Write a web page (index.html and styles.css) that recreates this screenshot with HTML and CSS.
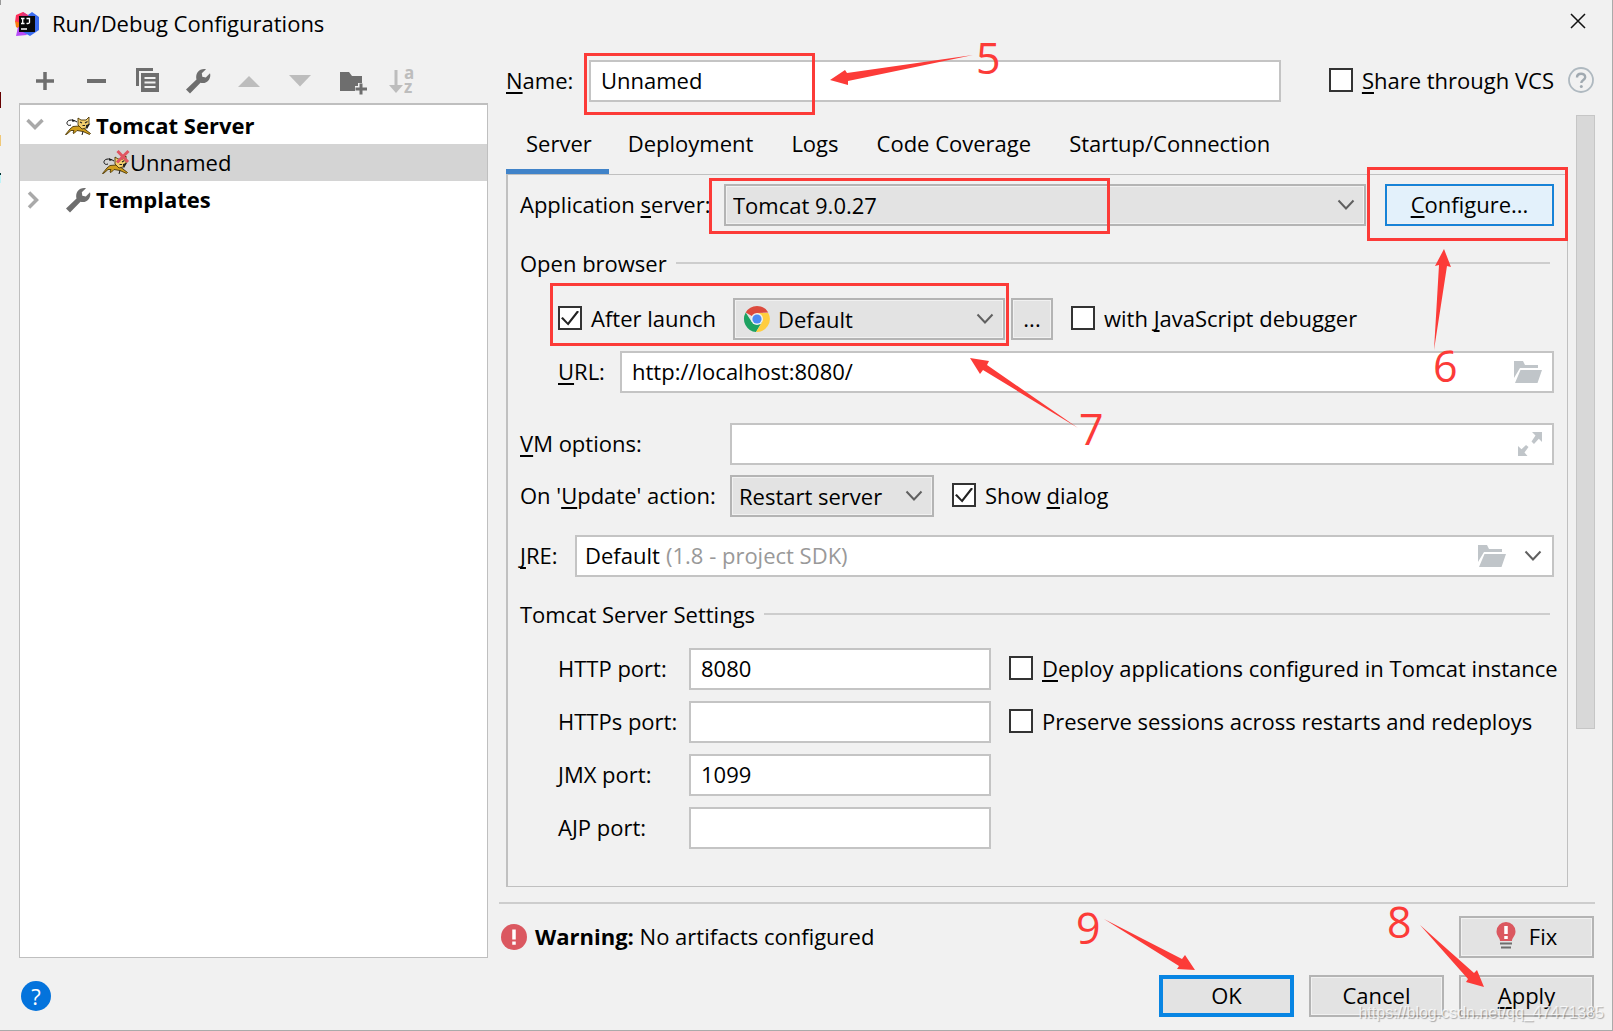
FILE: index.html
```html
<!DOCTYPE html>
<html lang="en">
<head>
<meta charset="utf-8">
<title>Run/Debug Configurations</title>
<link rel="stylesheet" href="styles.css">
</head>
<body>
<svg class="defs" aria-hidden="true">
  <symbol id="chevron" viewBox="0 0 18 12"><path d="M1.5 1.5 9 9.5 16.500 1.500" fill="none" stroke="#606060" stroke-width="2"/></symbol>
  <symbol id="wrench" viewBox="0 0 26 26"><path d="M1 21.500 11.500 11.500C10.500 7.500 12 3.500 15.500 1.800 17.500.8 19.500.7 21 1.200L16.800 5.200 17.300 8.800 20.800 9.400 25 5.200C25.600 7 25.400 9.500 24 11.700 22 14.600 18.800 15.600 15.500 14.800L5 25.500Z" fill="#6e6e6e"/></symbol>
  <symbol id="folder" viewBox="0 0 28 22"><path d="M0 0H9L11 4H24V7H6L0 17ZM6.500 9H28L23.500 22H1Z" fill="#c0c5c9"/></symbol>
  <symbol id="tomcat" viewBox="0 0 26 20">
    <path d="M12 6C7 2.500 1.500 4 2 7.500 2.200 9 4 10 6 9" fill="none" stroke="#111" stroke-width="1"/>
    <path d="M7 3 10 5 7.500 6" fill="#111"/>
    <path d="M.5 18.500 5 13 8 10.500 14 10 19 12.500 25.500 17.500 24.500 18.500 18 15.500 12 14.500 9 17.500 8 17 9 14.500 6 14.500 1.500 18.500Z" fill="#d19e1d" stroke="#4a3505" stroke-width=".9"/>
    <path d="M13 2 16 4H21L24 1V8L21 12 17 13 13 9Z" fill="#f4cf6d" stroke="#4a3505" stroke-width=".9"/>
    <path d="M15 6 17 7M20 7 22.500 5.500M17.500 9.500H20M21.500 9.500 24 8.500 22 12Z" fill="#222" stroke="#222" stroke-width="1.100"/>
    <path d="M18 15.500 17 19" stroke="#111" stroke-width="1"/>
  </symbol>
</svg>

<div class="dialog">
  <header class="titlebar">
    <svg class="logo" viewBox="0 0 24 24" aria-hidden="true">
      <path d="M1 3 8 0 13 3 9 13 0 10Z" fill="#fe315d"/>
      <path d="M0 9 5 11 6 18 1 15Z" fill="#f97a12"/>
      <path d="M3 15 9 17 12 23 1 24Z" fill="#b74af7"/>
      <path d="M13 3 17 0 24 5V18L15 24 8 20Z" fill="#3b6cf0"/>
      <path d="M8 0 14 4 11 8 6 5Z" fill="#e2337b"/>
      <rect x="4" y="4" width="16" height="16" fill="#080808"/>
      <path d="M6 6.500H9.500M7.700 6.500V11.500M6 11.500H9.500M11.500 6.500H14.500V10.500Q14 12 11.500 11.300M6 17H12" fill="none" stroke="#fff" stroke-width="1.300"/>
    </svg>
    <h1>Run/Debug Configurations</h1>
    <button class="icon-button close" aria-label="Close"><svg width="14" height="14" viewBox="0 0 14 14"><path d="M0 0 14 14M14 0 0 14" stroke="#111" stroke-width="1.500"/></svg></button>
  </header>

  <div class="content">
    <aside class="sidebar">
      <div class="toolbar">
        <button class="icon-button" aria-label="Add"><svg viewBox="0 0 26 26"><path d="M13 4V22M4 13H22" stroke="#6e6e6e" stroke-width="3.500"/></svg></button>
        <button class="icon-button" aria-label="Remove"><svg viewBox="0 0 26 26"><path d="M4 13H23" stroke="#6e6e6e" stroke-width="4"/></svg></button>
        <button class="icon-button" aria-label="Copy"><svg viewBox="0 0 26 26"><path d="M2 0H19V3H5V18H2Z" fill="#6e6e6e"/><path d="M7 5H25V24H7ZM10.500 9V11H21.500V9ZM10.500 13.500V15.500H21.500V13.500ZM10.500 18V20H21.500V18Z" fill="#6e6e6e" fill-rule="evenodd"/></svg></button>
        <button class="icon-button" aria-label="Edit templates"><svg><use href="#wrench"/></svg></button>
        <button class="icon-button" aria-label="Move up"><svg viewBox="0 0 26 26"><path d="M2 19 13 8 24 19Z" fill="#bdbdbd"/></svg></button>
        <button class="icon-button" aria-label="Move down"><svg viewBox="0 0 26 26"><path d="M2 7H24L13 18.500Z" fill="#bdbdbd"/></svg></button>
        <button class="icon-button" aria-label="New folder"><svg viewBox="0 0 26 26"><path d="M2 4H11L14 8H24V15H20V18H17V23H2Z" fill="#6e6e6e"/><path d="M23 15.500V26.500M17.500 21H29" stroke="#6e6e6e" stroke-width="3"/></svg></button>
        <button class="icon-button" aria-label="Sort"><svg viewBox="0 0 26 26"><path d="M7 2V19" stroke="#bdbdbd" stroke-width="3"/><path d="M0 17H14L7 25Z" fill="#bdbdbd"/><text x="15" y="11" class="sort-text">a</text><text x="15" y="25" class="sort-text">z</text></svg></button>
      </div>
      <ul class="tree">
        <li class="node">
          <svg class="twisty" viewBox="0 0 18 18"><path d="M1.500 3 9 10.500 16.500 3" fill="none" stroke="#a9a9a9" stroke-width="3.500"/></svg>
          <svg class="cat"><use href="#tomcat"/></svg><b>Tomcat Server</b>
        </li>
        <li class="node child selected">
          <svg class="cat-error" viewBox="0 0 28 26"><use href="#tomcat" y="5" width="26" height="20"/><path d="M15.500 1 26 12M26.500 1 15 12.500" stroke="#e05561" stroke-width="3"/></svg><span>Unnamed</span>
        </li>
        <li class="node">
          <svg class="twisty" viewBox="0 0 18 18"><path d="M3 1.500 10.500 9 3 16.500" fill="none" stroke="#a9a9a9" stroke-width="3.500"/></svg>
          <svg class="tool"><use href="#wrench"/></svg><b>Templates</b>
        </li>
      </ul>
    </aside>

    <main class="main">
      <div class="name-row">
        <label for="name"><u>N</u>ame:</label>
        <div class="field name-field"><input id="name" type="text" value="Unnamed"></div>
        <label class="check share"><input type="checkbox"><span><u>S</u>hare through VCS</span></label>
        <button class="icon-button hint" aria-label="Help"><svg width="28" height="28" viewBox="0 0 28 28"><circle cx="14" cy="13" r="12" fill="none" stroke="#afb9c0" stroke-width="1.800"/><path d="M10 10.500C10 5.500 18.200 5.500 18.200 10.200 18.200 13 14.300 13 14.300 16" fill="none" stroke="#a0a9b0" stroke-width="2.400"/><circle cx="14.300" cy="19.500" r="1.500" fill="#a0a9b0"/></svg></button>
      </div>

      <div class="pane">
        <div class="tabbed">
          <div class="tabs" role="tablist">
            <button role="tab" class="tab active" aria-selected="true">Server</button>
            <button role="tab" class="tab">Deployment</button>
            <button role="tab" class="tab">Logs</button>
            <button role="tab" class="tab">Code Coverage</button>
            <button role="tab" class="tab">Startup/Connection</button>
          </div>
          <section class="panel">
            <div class="row">
              <label class="w-server" for="server">Application <u>s</u>erver:</label>
              <div class="field combo grow"><select id="server"><option>Tomcat 9.0.27</option></select><svg class="chevron"><use href="#chevron"/></svg></div>
              <button class="button configure"><span><u>C</u>onfigure...</span></button>
            </div>

            <h2>Open browser</h2>
            <div class="row indent">
              <label class="check after"><input type="checkbox" checked><span>After launch</span></label>
              <div class="field combo browser">
                <svg class="chrome" viewBox="0 0 26 26" aria-hidden="true"><path d="M13 13 1.700 6.500A13 13 0 0 1 24.300 6.500L13 7Z" fill="#dc4a3d"/><path d="M13 13 7.800 16 1.700 6.500A13 13 0 0 0 12 26L18 16Z" fill="#1da261"/><path d="M13 7H24.300A13 13 0 0 1 12 26L18.200 16Z" fill="#ffcd40"/><circle cx="13" cy="13" r="6" fill="#f1f1f1"/><circle cx="13" cy="13" r="4.600" fill="#4c8bf5"/></svg>
                <select aria-label="Browser"><option>Default</option></select><svg class="chevron"><use href="#chevron"/></svg>
              </div>
              <button class="button more" aria-label="Browsers">...</button>
              <label class="check"><input type="checkbox"><span>with <u>J</u>avaScript debugger</span></label>
            </div>
            <div class="row indent url-row">
              <label class="w-url" for="url"><u>U</u>RL:</label>
              <div class="field grow"><input id="url" type="text" value="http://localhost:8080/"><svg class="folder"><use href="#folder"/></svg></div>
            </div>

            <div class="row vm-row">
              <label class="w-option" for="vm"><u>V</u>M options:</label>
              <div class="field grow"><input id="vm" type="text"><svg class="expand" viewBox="0 0 24 24"><path d="M14 0H24V10L20.800 6.800 16 12 13.500 9.500 17.500 3.500ZM0 14 3.500 17.300 8 13 10.500 15 6.500 20.500 9.500 24H0Z" fill="#c0c5c9"/></svg></div>
            </div>
            <div class="row update-row">
              <label class="w-option" for="update">On '<u>U</u>pdate' action:</label>
              <div class="field combo update"><select id="update"><option>Restart server</option></select><svg class="chevron"><use href="#chevron"/></svg></div>
              <label class="check"><input type="checkbox" checked><span>Show <u>d</u>ialog</span></label>
            </div>
            <div class="row jre-row">
              <label class="w-jre" for="jre"><u>J</u>RE:</label>
              <div class="field jre grow"><select id="jre"><option>Default</option></select><span class="sdk">(1.8 - project SDK)</span><svg class="folder"><use href="#folder"/></svg><svg class="chevron"><use href="#chevron"/></svg></div>
            </div>

            <h2 class="settings">Tomcat Server Settings</h2>
            <div class="ports">
              <label for="http">HTTP port:</label>
              <div class="field"><input id="http" type="text" value="8080"></div>
              <label class="check"><input type="checkbox"><span><u>D</u>eploy applications configured in Tomcat instance</span></label>
              <label for="https">HTTPs port:</label>
              <div class="field"><input id="https" type="text"></div>
              <label class="check"><input type="checkbox"><span>Preserve sessions across restarts and redeploys</span></label>
              <label for="jmx">JMX port:</label>
              <div class="field"><input id="jmx" type="text" value="1099"></div>
              <span></span>
              <label for="ajp">AJP port:</label>
              <div class="field"><input id="ajp" type="text"></div>
            </div>
          </section>
        </div>
        <div class="scroll-track"><div class="scroll-thumb"></div></div>
      </div>

      <div class="warning">
        <svg width="26" height="26" viewBox="0 0 26 26" aria-hidden="true"><circle cx="13" cy="13" r="13" fill="#db5860"/><path d="M13 5.500V15.500M13 17.500V20.800" stroke="#fff" stroke-width="3.500"/></svg>
        <p><b>Warning:</b> No artifacts configured</p>
        <button class="button"><svg width="20" height="28" viewBox="0 0 20 28" aria-hidden="true"><path d="M4 19C4 15.500.5 14 .5 9.500A9.500 9.500 0 0 1 19.500 9.500C19.500 14 16 15.500 16 19Z" fill="#db5860"/><path d="M10 4V12M10 14V17" stroke="#fff" stroke-width="3.500"/><path d="M4 21.500H16M5 25.500H15" stroke="#6e6e6e" stroke-width="2"/></svg>Fix</button>
      </div>
    </main>
  </div>

  <footer class="footer">
    <button class="icon-button help" aria-label="Help">?</button>
    <button class="button default">OK</button>
    <button class="button">Cancel</button>
    <button class="button"><span><u>A</u>pply</span></button>
  </footer>
</div>

<div class="window-edge"></div>
<svg class="marks" width="1613" height="1031" viewBox="0 0 1613 1031">
  <g fill="none" stroke="#fc3b38" stroke-width="3">
    <rect x="585.500" y="54.500" width="228" height="59"/>
    <rect x="710.500" y="179.500" width="398" height="53"/>
    <rect x="1368.500" y="168.500" width="198" height="71"/>
    <rect x="551.500" y="284.500" width="456" height="60"/>
  </g>
  <g fill="#fc3b38">
    <path d="M830 80 845 70 847 73 973 55 848 81 848 85Z"/>
    <path d="M1444 249 1451 267 1447 266 1434 350 1439 265 1435 266Z"/>
    <path d="M970 358 989 361 987 365 1078 428 983 370 980 374Z"/>
    <path d="M1195 970 1185 955 1182 959 1104 919 1179 966 1177 969Z"/>
    <path d="M1484 987 1477 970 1474 973 1420 925 1468 979 1466 982Z"/>
  </g>
  <g class="digits">
    <text x="976" y="74">5</text>
    <text x="1433" y="382">6</text>
    <text x="1079" y="445">7</text>
    <text x="1387" y="938">8</text>
    <text x="1076" y="944">9</text>
  </g>
</svg>
<div class="watermark">https://blog.csdn.net/qq_47471385</div>
</body>
</html>
```
FILE: styles.css
```css
* { box-sizing: border-box; }

body {
  margin: 0;
  position: relative;
  background: #f1f1f1;
  color: #000;
  font: 22px/30px "Open Sans", "Noto Sans", sans-serif;
}

button, input, select { font: inherit; color: inherit; margin: 0; }
h1, h2, p, ul { margin: 0; padding: 0; font-size: inherit; font-weight: normal; }
u { text-decoration-thickness: 2px; text-underline-offset: 3px; text-decoration-skip-ink: none; }
svg { flex: none; overflow: visible; }
label { padding-bottom: 2px; white-space: nowrap; }
.defs { position: absolute; width: 0; height: 0; }

.dialog {
  display: flex;
  flex-direction: column;
  min-height: 100vh;
  padding: 0 17px 13px 19px;
  border-right: 1px solid #aaa;
  border-bottom: 1px solid #aaa;
}

.icon-button { display: flex; padding: 0; border: 0; background: none; }

/* Title bar */
.titlebar { display: flex; align-items: center; height: 48px; margin-left: -4px; }
.logo { width: 24px; height: 24px; }
.titlebar h1 { margin-left: 13px; padding-bottom: 2px; }
.close { margin: 0 10px 6px auto; }

.content { display: flex; flex: 1; }

/* Configuration tree */
.sidebar { display: flex; flex-direction: column; width: 469px; flex: none; padding-top: 20px; }
.toolbar { display: flex; gap: 25px; height: 35px; padding-left: 13px; }
.toolbar svg { width: 26px; height: 26px; }
.sort-text { font: bold 17px "Open Sans", sans-serif; fill: #bdbdbd; }
.tree { flex: 1; padding-top: 2px; list-style: none; background: #fff; border: 1px solid #bfbfbf; border-top-width: 2px; }
.node { display: flex; align-items: center; height: 37px; padding-left: 6px; }
.node b, .node span { padding-bottom: 2px; }
.selected { background: #d4d4d4; }
.child { padding-left: 82px; }
.twisty { width: 18px; height: 18px; margin-right: 21px; }
.cat { width: 26px; height: 20px; margin-right: 5px; }
.cat-error { width: 28px; height: 26px; }
.tool { width: 26px; height: 26px; margin-right: 5px; }

/* Editor side */
.main { display: flex; flex-direction: column; flex: 1; min-width: 0; margin-left: 11px; padding-top: 12px; }
.name-row { display: flex; align-items: center; padding-left: 7px; }
.name-row > label:first-child { width: 83px; }
.name-field { flex: 1; }
.share { margin-left: 48px; }
.hint { margin-left: 13px; }

.field {
  display: flex;
  align-items: center;
  height: 42px;
  min-width: 0;
  padding: 0 10px;
  background: #fff;
  border: 2px solid #c4c4c4;
}
.field input { flex: 1; width: 0; min-width: 0; padding: 0 0 2px; border: 0; background: none; outline: 0; }
.field select { appearance: none; padding: 0; border: 0; background: none; outline: 0; }
.combo { padding: 0 9px 0 7px; background: #e3e3e3; border-color: #b4b4b4; box-shadow: inset 0 0 0 1px #f1f1f1; }
.combo select { flex: 1; min-width: 0; }
.chevron { width: 18px; height: 12px; }
.folder { width: 28px; height: 22px; }
.expand { width: 24px; height: 24px; }

.check { display: flex; align-items: center; gap: 9px; }
.check input { appearance: none; flex: none; width: 24px; height: 24px; background: #fff; border: 2px solid #333; }
.check input:checked { display: grid; place-items: center; }
.check input:checked::after {
  content: "";
  width: 18px;
  height: 15px;
  background: #222;
  clip-path: polygon(0 52%, 10% 44%, 38% 80%, 90% 0, 100% 8%, 40% 100%);
}

.button {
  display: flex;
  align-items: center;
  justify-content: center;
  gap: 13px;
  width: 135px;
  height: 42px;
  padding: 0 0 2px;
  background: #e3e3e3;
  border: 2px solid #b4b4b4;
  box-shadow: inset 0 0 0 1px #f1f1f1;
}

.pane { display: flex; flex: 1; gap: 8px; margin-top: 13px; padding-left: 7px; }
.tabbed { display: flex; flex-direction: column; flex: 1; min-width: 0; }
.tabs { display: flex; height: 59px; }
.tab { height: 60px; padding: 0 19px 4px; border: 0; background: none; }
.tab.active { padding: 2px 17px 0 20px; border-bottom: 6px solid #4083c9; }
.panel { flex: 1; padding: 9px 13px 32px 12px; border: 1px solid #c0c0c0; border-left-width: 2px; }
.scroll-track { width: 19px; }
.scroll-thumb { height: 614px; max-height: 80%; background: #d8d8d8; border: 1px solid #c6c6c6; }

.row { display: flex; align-items: center; }
.indent { padding-left: 38px; }
.grow { flex: 1; }
.w-server { width: 204px; }
.w-url { width: 62px; }
.w-option { width: 210px; }
.w-jre { width: 55px; }
.configure { width: 169px; margin-left: 19px; background: #e3f1fb; border-color: #1883d7; }

h2 { display: flex; align-items: center; gap: 9px; margin: 22px 4px 20px 0; }
h2::after { content: ""; flex: 1; height: 2px; background: #cdcdcd; }
.after { width: 175px; }
.browser { width: 272px; }
.chrome { width: 26px; height: 26px; margin: 0 8px 0 2px; }
.more { width: 42px; margin: 0 18px 0 6px; }
.url-row { margin-top: 11px; }
.vm-row { margin-top: 30px; }
.update-row { margin-top: 10px; }
.update { width: 204px; margin-right: 18px; }
.jre-row { margin-top: 18px; }
.jre { padding-left: 8px; }
.jre select, .sdk { padding-bottom: 2px; }
.sdk { flex: 1; margin-left: 6px; color: #999; }
.jre .folder { margin-right: 18px; }
h2.settings { margin-bottom: 19px; }
.ports { display: grid; grid-template-columns: 131px 302px 1fr; row-gap: 11px; align-items: center; padding-left: 38px; }
.ports .check { margin-left: 18px; }

.warning { display: flex; align-items: center; margin-top: 15px; padding: 12px 1px 0 0; border-top: 2px solid #cdcdcd; }
.warning svg:first-child { margin: 0 8px 0 2px; }
.warning p { flex: 1; padding-bottom: 2px; }
.warning .button svg { margin: 0; }

.footer { display: flex; align-items: center; gap: 15px; margin-top: 17px; padding-right: 1px; }
.help {
  align-items: center;
  justify-content: center;
  width: 30px;
  height: 30px;
  margin: 0 auto 0 2px;
  border-radius: 50%;
  background: #0473dc;
  color: #fff;
}
.default { border: 4px solid #0885e3; box-shadow: none; }

/* Sliver of the window behind the dialog */
.window-edge {
  position: absolute;
  left: 0;
  top: 0;
  width: 1px;
  height: 183px;
  background: linear-gradient(#999 5px, transparent 5px 92px, #600 92px 108px, transparent 108px 135px, #f0c878 135px 146px, transparent 146px 173px, #033 173px 175px, #bef3f7 175px);
}

/* Tutorial annotations drawn over the dialog */
.marks { position: absolute; left: 0; top: 0; pointer-events: none; }
.digits { font: 43px "Open Sans", "Noto Sans", sans-serif; fill: #fc3b38; }
.watermark {
  position: absolute;
  right: 9px;
  bottom: 6px;
  font: 16px/24px "Liberation Sans", sans-serif;
  color: rgba(255, 255, 255, .75);
  text-shadow: 1px 1px 1px rgba(0, 0, 0, .3);
  pointer-events: none;
}
```
